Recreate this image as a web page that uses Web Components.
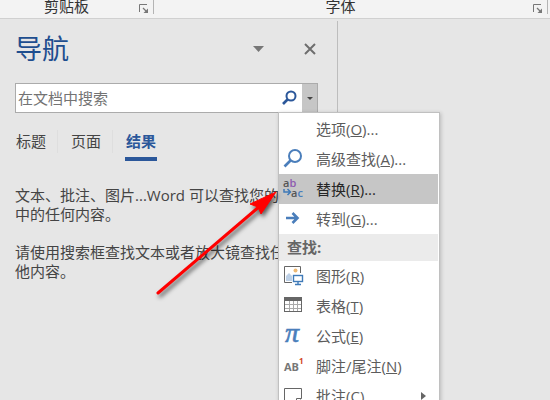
<!DOCTYPE html>
<html lang="zh-CN">
<head>
<meta charset="utf-8">
<title>导航</title>
<style>
  body {
    margin: 0;
    height: 100vh;
    overflow: hidden;
    background: #e6e6e6;
    color: #444;
    font: 15px/19px "Open Sans", "Noto Sans CJK SC", sans-serif;
  }
</style>
</head>
<body>
<word-window></word-window>

<script>
class RibbonGroup extends HTMLElement {
  constructor() {
    super();
    const shadow = this.attachShadow({ mode: 'open' });
    shadow.innerHTML = `
      <style>
        :host {
          display: flex;
          align-items: flex-start;
          box-sizing: border-box;
          height: 14px;
          border-right: 1px solid #b4b4b4;
          padding-right: 5px;
        }
        .label {
          flex: 1;
          text-align: center;
          padding-right: 6px;
          line-height: 12px;
          color: #333;
        }
        button {
          display: block;
          border: 0;
          padding: 0;
          margin-top: 4px;
          width: 9px;
          height: 9px;
          background: none;
        }
        svg { display: block; }
      </style>
      <span class="label"><slot></slot></span>
      <button type="button">
        <svg width="9" height="9" viewBox="0 0 9 9">
          <path d="M.5 8V.5H8" fill="none" stroke="#777"/>
          <path d="M4 4l3 3" stroke="#777" stroke-width="1.2"/>
          <path d="M9 4.500V9H4.500z" fill="#777"/>
        </svg>
      </button>
    `;
  }
}

class NavTab extends HTMLElement {
  constructor() {
    super();
    const shadow = this.attachShadow({ mode: 'open' });
    shadow.innerHTML = `
      <style>
        :host { display: block; }
        button {
          display: block;
          box-sizing: border-box;
          height: 31px;
          padding: 0 1px 4px;
          border: 0;
          border-bottom: 4px solid transparent;
          background: none;
          font: inherit;
          line-height: 23px;
          color: #444;
        }
        :host([selected]) button {
          color: #2b579a;
          font-weight: 700;
          border-color: #2b579a;
        }
      </style>
      <button type="button"><slot></slot></button>
    `;
  }
}

class MenuItem extends HTMLElement {
  constructor() {
    super();
    const shadow = this.attachShadow({ mode: 'open' });
    shadow.innerHTML = `
      <style>
        :host { display: block; }
        button {
          display: flex;
          align-items: center;
          width: 100%;
          height: 30px;
          padding: 0 12px 0 4px;
          border: 0;
          background: none;
          font: inherit;
          color: #5c5c5c;
          text-align: left;
          white-space: nowrap;
        }
        :host([active]) button {
          background: #c6c6c6;
          color: #262626;
        }
        .icon {
          flex: none;
          width: 22px;
          height: 22px;
          margin-right: 11px;
        }
        .text { flex: 1; }
        .arrow { display: none; }
        :host([submenu]) .arrow { display: block; }
      </style>
      <button type="button">
        <span class="icon"><slot name="icon"></slot></span>
        <span class="text"><slot></slot></span>
        <svg class="arrow" width="5" height="8"><path d="M0 0l5 4-5 4z" fill="#666"/></svg>
      </button>
    `;
  }
}

class FindMenu extends HTMLElement {
  constructor() {
    super();
    const shadow = this.attachShadow({ mode: 'open' });
    shadow.innerHTML = `
      <style>
        :host {
          display: block;
          box-sizing: border-box;
          width: 162px;
          border: 1px solid #c0c0c0;
          padding: 1px 1px 1px 0;
          background: #fff;
          box-shadow: 1px 1px 4px rgba(0, 0, 0, 0.2);
        }
        h2 {
          margin: 0;
          padding-left: 8px;
          background: #ebebeb;
          font-size: 15px;
          line-height: 27px;
          color: #666;
        }
        svg { display: block; overflow: visible; }
        svg text { font-family: "Open Sans", sans-serif; }
      </style>
      <menu-item>选项(<u>O</u>)...</menu-item>
      <menu-item>
        <svg slot="icon" width="22" height="22" viewBox="0 0 22 22" fill="none" stroke="#4a7ebb">
          <circle cx="12" cy="8" r="6" stroke-width="2"/>
          <path d="M7.500 12.500L1.500 18.500" stroke-width="2.600"/>
        </svg>
        高级查找(<u>A</u>)...
      </menu-item>
      <menu-item active>
        <svg slot="icon" width="22" height="22" viewBox="0 0 22 22" font-size="11" font-weight="600">
          <text x="0" y="9" fill="#555">a<tspan fill="#8e5bb0">b</tspan></text>
          <text x="8" y="19" fill="#555">a<tspan fill="#4a7ebb">c</tspan></text>
          <path d="M1 11v3h6M4.500 11l3 3-3 3" fill="none" stroke="#3f7ab8" stroke-width="1.500"/>
        </svg>
        替换(<u>R</u>)...
      </menu-item>
      <menu-item>
        <svg slot="icon" width="22" height="22" viewBox="0 0 22 22" fill="none" stroke="#4a7ebb" stroke-width="2.600">
          <path d="M3 10h11M9.500 5l5 5-5 5"/>
        </svg>
        转到(<u>G</u>)...
      </menu-item>
      <h2>查找:</h2>
      <menu-item>
        <svg slot="icon" width="22" height="22" viewBox="0 0 22 22">
          <path d="M9 17.500H1.500V1.500h16V8" fill="#fff" stroke="#666"/>
          <path d="M3 16v-5l3-3 3 3v5z" fill="#bdd0e6"/>
          <circle cx="12.500" cy="5.500" r="2" fill="#efb973"/>
          <rect x="10.500" y="10.500" width="9" height="6" fill="#fff" stroke="#3f7ab8" stroke-width="1.400"/>
          <path d="M15 17v2.500M12 19.500h6" stroke="#3f7ab8" stroke-width="1.400"/>
        </svg>
        图形(<u>R</u>)
      </menu-item>
      <menu-item>
        <svg slot="icon" width="22" height="22" viewBox="0 0 22 22">
          <path d="M6.500 5v12M10.500 5v12M14.500 5v12M1 9.500h17M1 13.500h17" stroke="#aaa"/>
          <rect x="1.500" y="2.500" width="17" height="14" fill="none" stroke="#666"/>
          <path d="M1 2h18v4H1z" fill="#666"/>
        </svg>
        表格(<u>T</u>)
      </menu-item>
      <menu-item>
        <svg slot="icon" width="22" height="22" viewBox="0 0 22 22">
          <text x="2" y="17" fill="#4a7ebb" stroke="#4a7ebb" stroke-width="0.600" font-size="28" font-style="italic" style="font-family: 'Liberation Serif', serif">π</text>
        </svg>
        公式(<u>E</u>)
      </menu-item>
      <menu-item>
        <svg slot="icon" width="22" height="22" viewBox="0 0 22 22">
          <text x="1" y="16" fill="#777" font-size="11" font-weight="700">AB</text>
          <text x="16" y="9" fill="#d24726" font-size="8" font-weight="700">1</text>
        </svg>
        脚注/尾注(<u>N</u>)
      </menu-item>
      <menu-item submenu>
        <svg slot="icon" width="22" height="22" viewBox="0 0 22 22" fill="#fff" stroke="#666">
          <path d="M1.500 3.500h17v10l-5 5h-12z"/>
          <path d="M13.500 18.500v-5h5"/>
        </svg>
        批注(<u>C</u>)
      </menu-item>
    `;
  }
}

class SearchBox extends HTMLElement {
  constructor() {
    super();
    const shadow = this.attachShadow({ mode: 'open' });
    shadow.innerHTML = `
      <style>
        :host {
          display: flex;
          position: relative;
          box-sizing: border-box;
          height: 30px;
          border: 1px solid #ababab;
          background: #fff;
        }
        input {
          flex: 1;
          min-width: 0;
          border: 0;
          padding: 0 2px;
          outline: none;
          background: none;
          font: inherit;
          color: #444;
        }
        input::placeholder { color: #737373; opacity: 1; }
        button {
          display: flex;
          align-items: center;
          justify-content: center;
          border: 0;
          padding: 0;
          background: none;
        }
        .find { width: 26px; }
        .drop { width: 15px; background: #c6c6c6; }
        find-menu {
          position: absolute;
          top: 28px;
          right: -123px;
        }
      </style>
      <input type="text" placeholder="在文档中搜索" aria-label="在文档中搜索">
      <button class="find" type="button">
        <svg width="16" height="16" viewBox="0 0 16 16" fill="none" stroke="#2b579a">
          <circle cx="10" cy="6" r="4.500" stroke-width="2"/>
          <path d="M6.500 9.500L2 14" stroke-width="2.600"/>
        </svg>
      </button>
      <button class="drop" type="button">
        <svg width="6" height="3"><path d="M0 0h6L3 3z" fill="#444"/></svg>
      </button>
      <find-menu></find-menu>
    `;
  }
}

class NavPane extends HTMLElement {
  constructor() {
    super();
    const shadow = this.attachShadow({ mode: 'open' });
    shadow.innerHTML = `
      <style>
        :host {
          display: block;
          box-sizing: border-box;
          border-right: 1px solid #bdbdbd;
          padding: 12px 19px 0 15px;
        }
        header {
          display: flex;
          align-items: center;
          height: 32px;
          margin-bottom: 18px;
        }
        h1 {
          flex: 1;
          margin: 0;
          font-size: 27px;
          font-weight: 400;
          line-height: 32px;
          color: #1e4e8f;
        }
        header button {
          display: flex;
          border: 0;
          padding: 0;
          background: none;
        }
        .options { margin-right: 40px; }
        .close { margin-right: 2px; }
        nav {
          display: flex;
          align-items: flex-start;
          gap: 10px;
          margin: 17px 0 25px;
        }
        .line {
          width: 1px;
          height: 23px;
          margin-right: 2px;
          background: #dedede;
        }
        p { margin: 0 0 19px; white-space: nowrap; }
      </style>
      <header>
        <h1>导航</h1>
        <button class="options" type="button">
          <svg width="11" height="6"><path d="M0 0h11L5.500 6z" fill="#777"/></svg>
        </button>
        <button class="close" type="button">
          <svg width="12" height="12"><path d="M1 1l10 10M11 1L1 11" stroke="#6e6e6e" stroke-width="2"/></svg>
        </button>
      </header>
      <search-box></search-box>
      <nav>
        <nav-tab>标题</nav-tab>
        <span class="line"></span>
        <nav-tab>页面</nav-tab>
        <span class="line"></span>
        <nav-tab selected>结果</nav-tab>
      </nav>
      <p>文本、批注、图片...Word 可以查找您的<br>中的任何内容。</p>
      <p>请使用搜索框查找文本或者放大镜查找任<br>他内容。</p>
    `;
  }
}

class WordWindow extends HTMLElement {
  constructor() {
    super();
    const shadow = this.attachShadow({ mode: 'open' });
    shadow.innerHTML = `
      <style>
        :host {
          display: flex;
          flex-direction: column;
          height: 100vh;
          position: relative;
        }
        .ribbon {
          display: flex;
          height: 18px;
          background: #f3f3f3;
          border-bottom: 1px solid #d0d0d0;
        }
        .clipboard { width: 154px; }
        .font { flex: 1; margin-right: 2px; }
        .body {
          flex: 1;
          display: flex;
          padding-top: 2px;
        }
        nav-pane { width: 338px; }
        /* red pointer drawn over the pane and the menu */
        .pointer {
          position: absolute;
          left: 150px;
          top: 180px;
          pointer-events: none;
          filter: drop-shadow(2px 3px 2px rgba(0, 0, 0, 0.6));
        }
      </style>
      <div class="ribbon">
        <ribbon-group class="clipboard">剪贴板</ribbon-group>
        <ribbon-group class="font">字体</ribbon-group>
      </div>
      <div class="body">
        <nav-pane></nav-pane>
      </div>
      <svg class="pointer" width="136" height="124" viewBox="0 0 136 124">
        <path d="M8 113L110 26" stroke="#f00" stroke-width="3" stroke-linecap="round"/>
        <path d="M126 12L100 24l8 3 3 7z" fill="#f00" stroke="#f00" stroke-linejoin="round"/>
      </svg>
    `;
  }
}

customElements.define('ribbon-group', RibbonGroup);
customElements.define('nav-tab', NavTab);
customElements.define('menu-item', MenuItem);
customElements.define('find-menu', FindMenu);
customElements.define('search-box', SearchBox);
customElements.define('nav-pane', NavPane);
customElements.define('word-window', WordWindow);
</script>
</body>
</html>
